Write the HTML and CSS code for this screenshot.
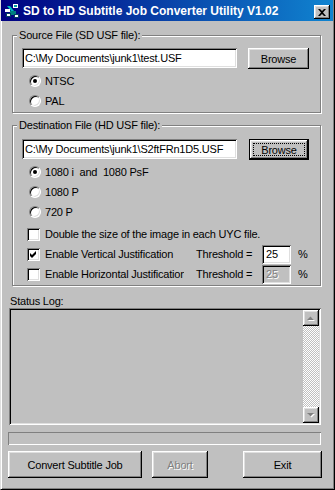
FILE: index.html
```html
<!DOCTYPE html>
<html>
<head>
<meta charset="utf-8">
<link rel="stylesheet" href="styles.css">
</head>
<body>
<div class="window">
  <div class="titlebar">
    <svg class="app-icon" viewBox="0 0 16 16" width="16" height="16">
      <rect x="9" y="1" width="5" height="4" fill="#fff"/>
      <rect x="10" y="2" width="3" height="2" fill="#00a0a0"/>
      <path d="M3 3 L6 3 L10 8 L8 9 Z" fill="#00c0c0"/>
      <rect x="1" y="6" width="5" height="3" fill="#fff"/>
      <rect x="6" y="8" width="6" height="4" fill="#008080"/>
      <rect x="2" y="10" width="5" height="4" fill="#004060"/>
      <rect x="10" y="11" width="5" height="4" fill="#004060"/>
      <rect x="3" y="11" width="3" height="2" fill="#fff"/>
      <rect x="11" y="12" width="3" height="2" fill="#fff"/>
    </svg>
    <span class="title">SD to HD Subtitle Job Converter Utility V1.02</span>
    <span class="close-btn">
      <svg viewBox="0 0 8 7" width="8" height="7">
        <path d="M0 0 H2 L4 2 L6 0 H8 L5 3.5 L8 7 H6 L4 5 L2 7 H0 L3 3.5 Z" fill="#000"/>
      </svg>
    </span>
  </div>
  <div class="client">
    <div class="group group-source">
      <div class="group-title">Source File (SD USF file):</div>
      <div class="file-row">
        <div class="textbox file-box">C:\My Documents\junk1\test.USF</div>
        <div class="btn browse">Browse</div>
      </div>
      <div class="options">
        <div class="option"><span class="radio checked"></span><span class="opt-label radio-label">NTSC</span></div>
        <div class="option"><span class="radio"></span><span class="opt-label radio-label">PAL</span></div>
      </div>
    </div>

    <div class="group group-dest">
      <div class="group-title">Destination File (HD USF file):</div>
      <div class="file-row file-row-dest">
        <div class="textbox file-box">C:\My Documents\junk1\S2ftFRn1D5.USF</div>
        <div class="btn browse default"><span class="focus">Browse</span></div>
      </div>
      <div class="options">
        <div class="option"><span class="radio checked"></span><span class="opt-label radio-label">1080 i&nbsp; and&nbsp; 1080 PsF</span></div>
        <div class="option"><span class="radio"></span><span class="opt-label radio-label">1080 P</span></div>
        <div class="option"><span class="radio"></span><span class="opt-label radio-label">720 P</span></div>
      </div>
      <div class="options">
        <div class="option check-row"><span class="check"></span><span class="opt-label">Double the size of the image in each UYC file.</span></div>
        <div class="option check-row">
          <span class="check checked"><svg viewBox="0 0 7 7" width="7" height="7"><path d="M0 2 L2 4 L6 0 L6 3 L2 7 L0 5 Z" fill="#000"/></svg></span>
          <span class="opt-label clip">Enable Vertical Justification</span>
          <span class="thr-label">Threshold =</span>
          <span class="textbox thr-box">25</span>
          <span class="pct">%</span>
        </div>
        <div class="option check-row">
          <span class="check"></span>
          <span class="opt-label clip">Enable Horizontal Justification</span>
          <span class="thr-label">Threshold =</span>
          <span class="textbox thr-box disabled">25</span>
          <span class="pct">%</span>
        </div>
      </div>
    </div>

    <div class="status-label">Status Log:</div>
    <div class="listbox">
      <div class="scrollbar">
        <div class="btn sb-btn">
          <svg viewBox="0 0 8 5" width="8" height="5"><path d="M1 5 L4.5 1.5 L8 5 Z" fill="#fff"/><path d="M0 4 L3.5 0.5 L7 4 Z" fill="#808080"/></svg>
        </div>
        <div class="sb-track"></div>
        <div class="btn sb-btn">
          <svg viewBox="0 0 8 5" width="8" height="5"><path d="M1 1 L8 1 L4.5 4.5 Z" fill="#fff"/><path d="M0 0 L7 0 L3.5 3.5 Z" fill="#808080"/></svg>
        </div>
      </div>
    </div>
    <div class="progress"></div>
    <div class="button-row">
      <div class="btn action convert">Convert Subtitle Job</div>
      <div class="btn action abort disabled">Abort</div>
      <div class="btn action exit">Exit</div>
    </div>
  </div>
</div>
</body>
</html>
```

FILE: styles.css
```css
* { box-sizing: border-box; }

body {
  margin: 0;
  background: #c0c0c0;
  font-family: "Liberation Sans", Arial, sans-serif;
  font-size: 11px;
  letter-spacing: -0.2px;
  color: #000;
}

.window {
  width: 335px;
  height: 490px;
  overflow: hidden;
  background: #c0c0c0;
  border-left: 1px solid #dfdfdf;
  border-right: 1px solid #000;
  border-bottom: 1px solid #000;
  padding: 0 1px 1px 1px;
  box-shadow: inset 1px 0 #fff, inset -1px -1px #808080;
}

.titlebar {
  display: flex;
  align-items: center;
  height: 21px;
  margin-left: -2px;
  padding: 0 3px 0 4px;
  background: linear-gradient(90deg, #000080, #1084d0);
  color: #fff;
  font-weight: bold;
  font-size: 12px;
  letter-spacing: 0;
}

.app-icon { flex: none; margin-right: 3px; }

.title { flex: 1; white-space: nowrap; }

.close-btn {
  flex: none;
  width: 16px;
  height: 14px;
  align-self: flex-start;
  margin-top: 5px;
  display: flex;
  align-items: center;
  justify-content: center;
  background: #c0c0c0;
  box-shadow: inset -1px -1px #000, inset 1px 1px #fff, inset -2px -2px #808080, inset 2px 2px #dfdfdf;
}

.client { padding: 0 11px 0 6px; }

.group {
  margin: 0 1px 0 4px;
  padding: 0 11px 1px 9px;
  border: 1px solid #808080;
  box-shadow: inset 1px 1px #fff, 1px 1px #fff;
}

.group-source { margin-top: 14px; }
.group-dest { margin-top: 12px; }

.group-title {
  display: table;
  margin: -7px 0 0 -5px;
  padding: 0 2px;
  line-height: 13px;
  background: #c0c0c0;
}

.file-row {
  display: flex;
  align-items: flex-start;
  margin-top: 6px;
}
.file-row-dest { margin-top: 7px; }

.textbox {
  background: #fff;
  height: 20px;
  line-height: 20px;
  padding: 0 3px;
  white-space: nowrap;
  overflow: hidden;
  box-shadow: inset 1px 1px #808080, inset -1px -1px #fff, inset 2px 2px #000, inset -2px -2px #dfdfdf;
}

.file-box { width: 215px; flex: none; }

.btn {
  display: flex;
  align-items: center;
  justify-content: center;
  background: #c0c0c0;
  box-shadow: inset -1px -1px #000, inset 1px 1px #fff, inset -2px -2px #808080, inset 2px 2px #dfdfdf;
}

.browse { width: 61px; height: 21px; margin-left: 11px; flex: none; }

.browse.default {
  width: 60px;
  margin-left: 12px;
  border: 1px solid #000;
  padding: 3px;
}

.focus {
  flex: 1;
  align-self: stretch;
  display: flex;
  align-items: center;
  justify-content: center;
  border: 1px dotted #000;
}

.options { margin-top: 2px; }

.option {
  display: flex;
  align-items: center;
  height: 20px;
  padding-left: 7px;
}

.check-row { padding-left: 5px; }

.opt-label { margin-left: 5px; white-space: nowrap; }
.radio-label { margin-left: 4px; }

.radio {
  position: relative;
  flex: none;
  width: 12px;
  height: 12px;
  border-radius: 50%;
  background: #fff;
  border: 1px solid;
  border-color: #808080 #fff #fff #808080;
  box-shadow: inset 1px 1px 0 #000, inset -1px -1px 0 #dfdfdf;
}

.radio.checked::after {
  content: "";
  position: absolute;
  left: 3px;
  top: 3px;
  width: 4px;
  height: 4px;
  border-radius: 50%;
  background: #000;
}

.check {
  flex: none;
  width: 13px;
  height: 13px;
  display: flex;
  align-items: center;
  justify-content: center;
  background: #fff;
  box-shadow: inset 1px 1px #808080, inset -1px -1px #fff, inset 2px 2px #000, inset -2px -2px #dfdfdf;
}

.clip { width: 139px; overflow: hidden; flex: none; }

.thr-label { margin-left: 12px; width: 66px; flex: none; white-space: nowrap; }

.thr-box {
  width: 29px;
  height: 19px;
  line-height: 19px;
  padding: 0 2px 0 4px;
  flex: none;
}

.thr-box.disabled {
  background: #c0c0c0;
  color: #808080;
  text-shadow: 1px 1px 0 #fff;
}

.pct { margin-left: 7px; }

.status-label {
  margin: 9px 0 0 2px;
  line-height: 13px;
}

.listbox {
  display: flex;
  justify-content: flex-end;
  width: 312px;
  height: 117px;
  margin-left: 1px;
  padding: 2px;
  background: #c0c0c0;
  box-shadow: inset 1px 1px #808080, inset -1px -1px #fff, inset 2px 2px #000, inset -2px -2px #dfdfdf;
}

.scrollbar {
  display: flex;
  flex-direction: column;
  width: 16px;
}

.sb-btn { height: 16px; flex: none; }

.sb-track {
  flex: 1;
  background: repeating-conic-gradient(#fff 0 25%, #c0c0c0 0 50%) 0 0 / 2px 2px;
}

.progress {
  width: 313px;
  height: 13px;
  margin-top: 7px;
  box-shadow: inset 1px 1px #808080, inset -1px -1px #fff;
}

.button-row {
  display: flex;
  margin-top: 6px;
}

.action { height: 27px; flex: none; }
.convert { width: 134px; }
.abort { width: 56px; margin-left: 10px; }
.exit { width: 79px; margin-left: auto; }

.btn.disabled {
  color: #808080;
  text-shadow: 1px 1px 0 #fff;
}
```
